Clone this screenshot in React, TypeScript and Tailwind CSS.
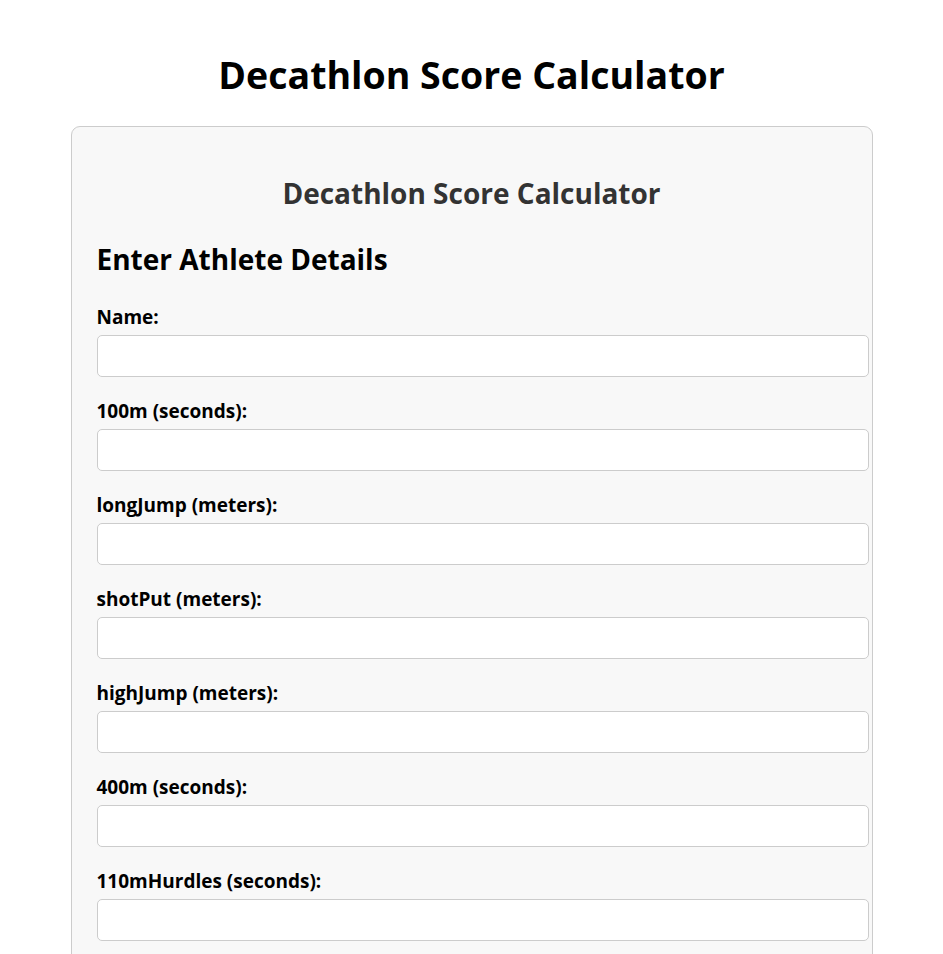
const fields = [
  "Name:",
  "100m (seconds):",
  "longJump (meters):",
  "shotPut (meters):",
  "highJump (meters):",
  "400m (seconds):",
  "110mHurdles (seconds):",
  "discusThrow (meters):",
  "poleVault (meters):",
  "javelinThrow (meters):",
  "1500m (seconds):",
];

export default function App() {
  return (
    <div className="min-h-screen bg-white pb-10 font-['Open_Sans',sans-serif] text-black">
      <h1 className="pt-[52px] text-center text-[37.5px] font-bold leading-[46px]">
        Decathlon Score Calculator
      </h1>

      <div className="mx-auto mt-[28px] w-[802px] rounded-[9px] border border-[#cccccc] bg-[#f8f8f8] p-[25px]">
        <h2 className="mt-[23px] text-center text-[28px] font-bold leading-[36px] text-[#333333]">
          Decathlon Score Calculator
        </h2>
        <h3 className="mt-[31px] text-[28px] font-bold leading-[34px]">Enter Athlete Details</h3>

        <form className="mt-[30px] flex flex-col gap-[23px]">
          {fields.map((f) => (
            <div key={f}>
              <label className="block text-[19px] font-bold leading-[22px]">{f}</label>
              <input
                type="text"
                className="mt-[7px] box-content block h-5 w-full rounded-[5px] border border-[#cccccc] bg-white px-[10px] py-[10px] outline-none"
              />
            </div>
          ))}
        </form>
      </div>
    </div>
  );
}
